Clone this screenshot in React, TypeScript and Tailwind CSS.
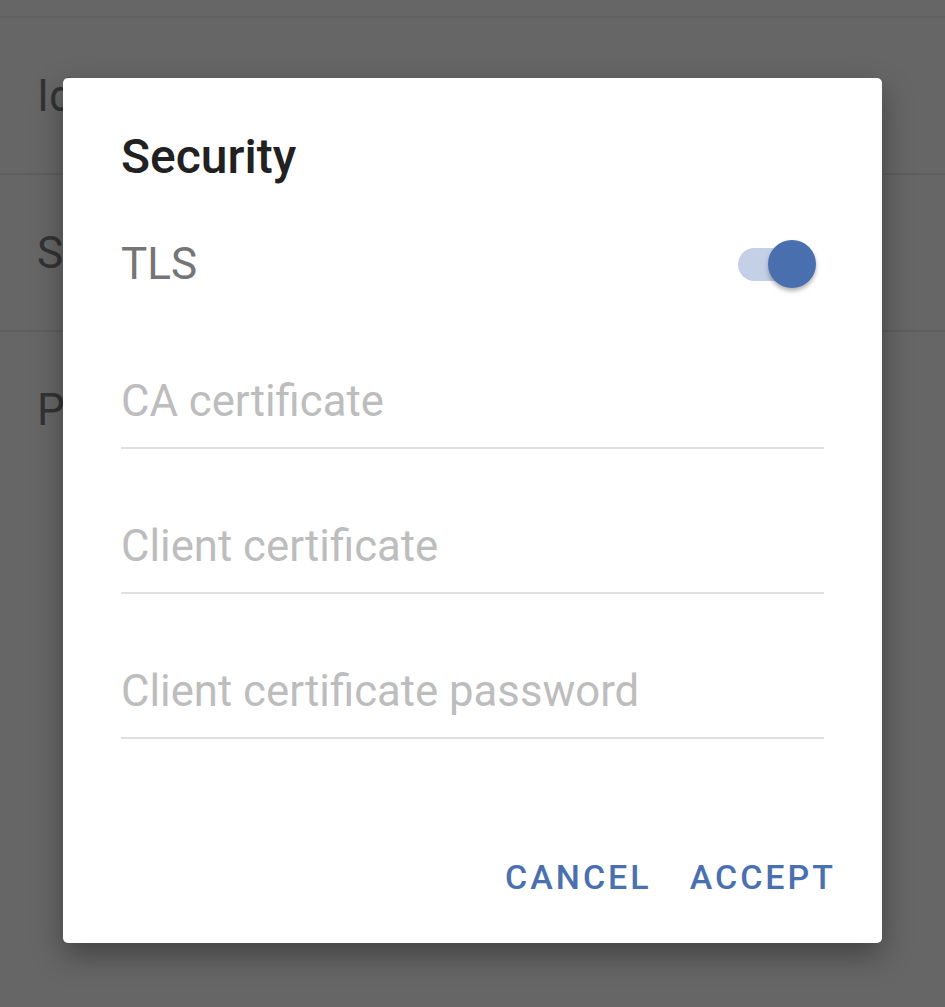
const rows = ["Identity", "Server", "Port"];

const fields = ["CA certificate", "Client certificate", "Client certificate password"];

function Switch() {
  return (
    <div className="relative h-[48px] w-[78px]">
      <div className="absolute left-0 top-[8px] h-[33px] w-[70px] rounded-full bg-[#c3d0e6]" />
      <div className="absolute right-0 top-0 h-[48px] w-[48px] rounded-full bg-[#4a6fae] shadow-[0_3px_4px_rgba(0,0,0,0.3)]" />
    </div>
  );
}

export default function App() {
  return (
    <div
      className="relative h-[1007px] w-[945px] overflow-hidden bg-[#666666]"
      style={{ fontFamily: "Roboto, 'Noto Sans', sans-serif" }}
    >
      {/* page behind the scrim */}
      <div className="pt-[16px]">
        {rows.map((r) => (
          <div
            key={r}
            className="flex h-[157px] items-center border-t-2 border-[#5e5e5e] pl-[37px] text-[44px] text-[#333333]"
          >
            {r}
          </div>
        ))}
      </div>

      {/* dialog */}
      <div className="absolute left-[63px] top-[78px] h-[865px] w-[819px] rounded-[5px] bg-white shadow-[0_12px_30px_rgba(0,0,0,0.35)]">
        <div className="px-[58px] pt-[50px]">
          <div className="text-[48px] font-medium leading-[58px] text-[#212121]">Security</div>

          <div className="mt-[54px] flex h-[48px] items-center justify-between">
            <span className="text-[44px] leading-[48px] text-[#757575]">TLS</span>
            <div className="mr-[8px]">
              <Switch />
            </div>
          </div>

          <div className="mt-[89px] flex flex-col gap-[73px]">
            {fields.map((f) => (
              <div key={f} className="border-b-2 border-[#e0e0e0] pb-[22px]">
                <div className="text-[43.7px] leading-[48px] text-[#bdbdbd]">{f}</div>
              </div>
            ))}
          </div>
        </div>

        <div className="mt-[118px] flex justify-end gap-[38px] pr-[46px]">
          <button className="text-[34px] font-medium leading-[40px] tracking-[3px] text-[#4a70b0]">
            CANCEL
          </button>
          <button className="text-[34px] font-medium leading-[40px] tracking-[3px] text-[#4a70b0]">
            ACCEPT
          </button>
        </div>
      </div>
    </div>
  );
}
